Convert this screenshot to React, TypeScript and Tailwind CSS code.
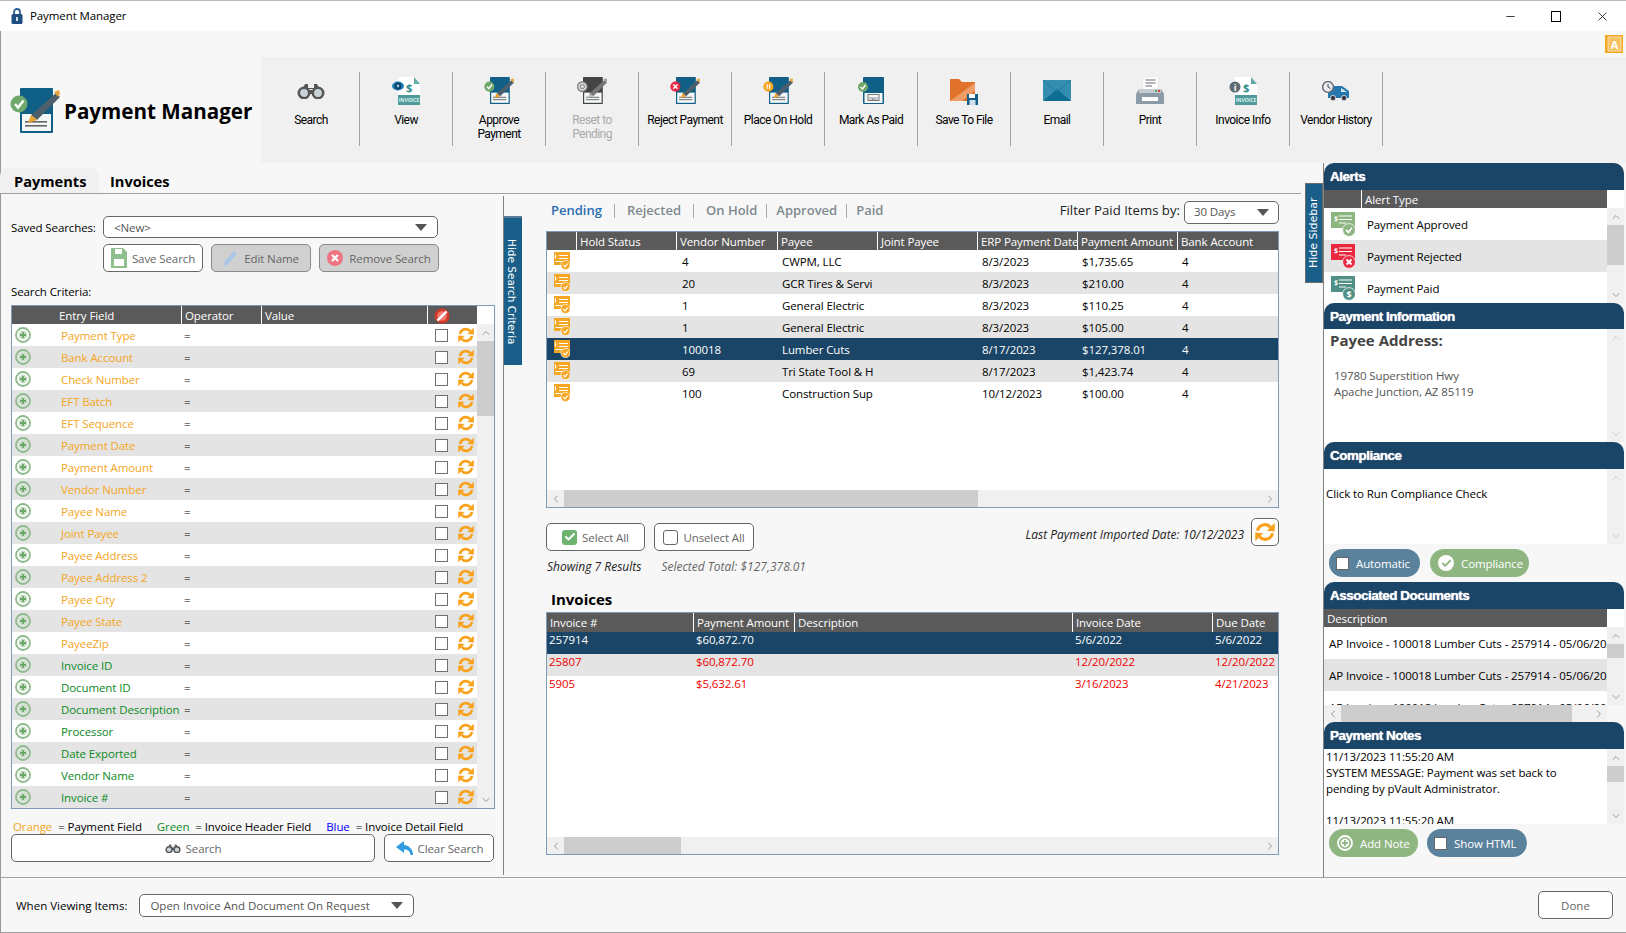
import React from 'react';
import { Check, ChevronDown, ChevronLeft, ChevronRight, ChevronUp, Minus, X } from 'lucide-react';

const searchFields = [
  { name: 'Payment Type', tone: 'orange' },
  { name: 'Bank Account', tone: 'orange' },
  { name: 'Check Number', tone: 'orange' },
  { name: 'EFT Batch', tone: 'orange' },
  { name: 'EFT Sequence', tone: 'orange' },
  { name: 'Payment Date', tone: 'orange' },
  { name: 'Payment Amount', tone: 'orange' },
  { name: 'Vendor Number', tone: 'orange' },
  { name: 'Payee Name', tone: 'orange' },
  { name: 'Joint Payee', tone: 'orange' },
  { name: 'Payee Address', tone: 'orange' },
  { name: 'Payee Address 2', tone: 'orange' },
  { name: 'Payee City', tone: 'orange' },
  { name: 'Payee State', tone: 'orange' },
  { name: 'PayeeZip', tone: 'orange' },
  { name: 'Invoice ID', tone: 'green' },
  { name: 'Document ID', tone: 'green' },
  { name: 'Document Description', tone: 'green' },
  { name: 'Processor', tone: 'green' },
  { name: 'Date Exported', tone: 'green' },
  { name: 'Vendor Name', tone: 'green' },
  { name: 'Invoice #', tone: 'green' },
];

const payments = [
  ['4', 'CWPM, LLC', '8/3/2023', '$1,735.65'],
  ['20', 'GCR Tires & Servi', '8/3/2023', '$210.00'],
  ['1', 'General Electric', '8/3/2023', '$110.25'],
  ['1', 'General Electric', '8/3/2023', '$105.00'],
  ['100018', 'Lumber Cuts', '8/17/2023', '$127,378.01'],
  ['69', 'Tri State Tool & H', '8/17/2023', '$1,423.74'],
  ['100', 'Construction Sup', '10/12/2023', '$100.00'],
];

const invoices = [
  ['257914', '$60,872.70', '5/6/2022', '5/6/2022'],
  ['25807', '$60,872.70', '12/20/2022', '12/20/2022'],
  ['5905', '$5,632.61', '3/16/2023', '4/21/2023'],
];

const paymentCols = 'grid-cols-[29px_100px_101px_100px_100px_100px_100px_100px]';
const invoiceCols = 'grid-cols-[146px_101px_278px_140px_67px]';

// Icons
const DocPen = ({ badge, grey, large }: { badge: string; grey?: boolean; large?: boolean }) => (
  <svg viewBox="0 0 50 45" className={large ? 'w-[50px] h-[45px]' : 'w-[30px] h-[27px]'}>
    <rect x="10" y="0" width="33" height="45" rx="1" fill={grey ? '#444' : '#0f5f86'} />
    <rect x="12" y="26" width="29" height="17" fill="#f4f7f8" />
    <rect x="15" y="33" width="22" height="1.6" fill="#666" />
    <rect x="15" y="37" width="22" height="1.6" fill="#666" />
    <path d="M46 5 L50 9 L27 32 L21 27 Z" fill={grey ? '#777' : '#4d5f6d'} />
    <path d="M44 4 L49 2 L50 6 L48 9 Z" fill={grey ? '#999' : '#e9a33b'} />
    <path d="M21 27 L27 32 L18 35 Z" fill={grey ? '#bbb' : '#f0a22e'} />
    {badge === 'check' && (
      <g>
        <circle cx="9" cy="16" r="8.5" fill="#6fa86a" />
        <path d="M5 16 L8 19.5 L13.5 12.5" stroke="#fff" strokeWidth="2.4" fill="none" />
      </g>
    )}
    {badge === 'x' && (
      <g>
        <circle cx="9" cy="16" r="8.5" fill="#e52b46" />
        <path d="M5.5 12.5 L12.5 19.5 M12.5 12.5 L5.5 19.5" stroke="#fff" strokeWidth="2.4" />
      </g>
    )}
    {badge === 'hold' && (
      <g>
        <circle cx="9" cy="16" r="8.5" fill="#f5a623" />
        <path d="M7 12 V20 M11 12 V20" stroke="#fff" strokeWidth="2" />
      </g>
    )}
    {badge === 'reset' && (
      <g>
        <circle cx="9" cy="16" r="8" fill="#ddd" stroke="#777" strokeWidth="2" />
        <circle cx="9" cy="16" r="3.5" fill="none" stroke="#777" strokeWidth="1.6" />
      </g>
    )}
  </svg>
);

const PaidDoc = () => (
  <svg viewBox="0 0 30 27" className="w-[30px] h-[27px]">
    <rect x="7" y="0" width="21" height="27" rx="1" fill="#0f5f86" />
    <rect x="8.5" y="16" width="18" height="10" fill="#f4f7f8" />
    <rect x="12" y="17.5" width="11" height="6" fill="none" stroke="#777" />
    <text x="17.5" y="22.5" fontSize="4" textAnchor="middle" fill="#555">PAID</text>
    <circle cx="7" cy="10" r="5" fill="#6fa86a" />
    <path d="M4.5 10 L6.5 12 L9.5 8" stroke="#fff" strokeWidth="1.4" fill="none" />
  </svg>
);

const Binoculars = ({ small }: { small?: boolean }) => (
  <svg viewBox="0 0 28 16" className={small ? 'w-[16px] h-[9px]' : 'w-[28px] h-[16px]'}>
    <path d="M8 1 H11 V6 H17 V1 H20 L22 5 H6 Z" fill="#555" />
    <circle cx="7" cy="10" r="5.2" fill="#c7d3d9" stroke="#555" strokeWidth="2.6" />
    <circle cx="21" cy="10" r="5.2" fill="#c7d3d9" stroke="#555" strokeWidth="2.6" />
    <rect x="12" y="7" width="4" height="4" fill="#555" />
  </svg>
);

const InvoiceDoc = ({ info }: { info?: boolean }) => (
  <svg viewBox="0 0 28 28" className="w-[28px] h-[28px]">
    <path d="M6 0 H22 L28 7 V28 H6 Z" fill="#fff" />
    <path d="M22 0 L28 7 H22 Z" fill="#62aaa6" />
    <rect x="6" y="18" width="22" height="10" fill="#4f9a98" />
    <text x="17" y="25" fontSize="5.2" fontWeight="700" textAnchor="middle" fill="#d8efee">INVOICE</text>
    <text x="17" y="15" fontSize="11" fontWeight="700" textAnchor="middle" fill="#2f8d8b">$</text>
    {info ? (
      <g>
        <circle cx="6" cy="10" r="5.5" fill="#5e6b73" />
        <text x="6" y="13.5" fontSize="9" fontWeight="700" textAnchor="middle" fill="#fff">i</text>
      </g>
    ) : (
      <g>
        <ellipse cx="6" cy="9" rx="6" ry="4.4" fill="#1b7fb5" />
        <circle cx="6" cy="9" r="3.4" fill="#0a3f63" />
        <circle cx="6" cy="9" r="1.4" fill="#8fc7e6" />
      </g>
    )}
  </svg>
);

const FolderSave = () => (
  <svg viewBox="0 0 28 28" className="w-[28px] h-[28px]">
    <path d="M0 2 H9 L12 5 H25 V24 H0 Z" fill="#e0722c" />
    <path d="M0 24 L25 6 V14 L12 24 Z" fill="#ef9c66" />
    <rect x="17" y="17" width="11" height="11" fill="#155f86" />
    <rect x="19" y="17" width="6" height="4" fill="#fff" />
    <rect x="19.5" y="23" width="6" height="5" fill="#cfe0ea" />
  </svg>
);

const Envelope = () => (
  <svg viewBox="0 0 28 21" className="w-[28px] h-[21px]">
    <rect width="28" height="21" rx="1" fill="#358eb0" />
    <path d="M0 21 L14 9 L28 21 Z" fill="#0f6e93" />
    <path d="M0 0 L14 12 L28 0" fill="none" stroke="#1c7a9f" strokeWidth="1" />
  </svg>
);

const Printer = () => (
  <svg viewBox="0 0 28 27" className="w-[28px] h-[27px]">
    <rect x="7" y="0" width="15" height="14" fill="#fff" stroke="#ddd" strokeWidth="0.5" />
    <path d="M9.5 3 H19.5 M9.5 6 H19.5 M9.5 9 H16" stroke="#667" strokeWidth="1" />
    <path d="M3 12 H25 L28 17 V27 H0 V17 Z" fill="#8c9ba6" />
    <rect x="3" y="12" width="22" height="4" fill="#c4ccd2" />
    <rect x="22" y="13" width="2" height="2" fill="#d9414a" />
    <rect x="19" y="13" width="2" height="2" fill="#5aa760" />
    <rect x="6" y="20" width="16" height="4" fill="#fff" />
  </svg>
);

const Truck = () => (
  <svg viewBox="0 0 28 20" className="w-[28px] h-[20px]">
    <path d="M6 5 H20 L27 10 V17 H6 Z" fill="#2577ad" />
    <path d="M19 7 L25 11 H19 Z" fill="#cde4f2" />
    <circle cx="11" cy="17" r="2.6" fill="#334" stroke="#ccc" />
    <circle cx="22" cy="17" r="2.6" fill="#334" stroke="#ccc" />
    <circle cx="6" cy="6" r="5.4" fill="#e8ecef" stroke="#667" strokeWidth="1.4" />
    <path d="M6 3 V6 L8.5 7.5" stroke="#445" strokeWidth="1" fill="none" />
  </svg>
);

const CheckBadge = ({ color, mark }: { color: string; mark: string }) => (
  <svg viewBox="0 0 24 26" className="w-[24px] h-[26px]">
    <rect y="1" width="24" height="16" fill={color} />
    <text x="3" y="10" fontSize="7" fontWeight="700" fill="#fff">$</text>
    <path d="M8 5 H21 M8 8.5 H21 M8 12 H15" stroke="#fff" strokeWidth="1.2" />
    <circle cx="18" cy="19" r="6.4" fill={color} stroke="#fff" strokeWidth="0.8" />
    {mark === 'check' && <path d="M15 19 L17.4 21.4 L21 16.8" stroke="#fff" strokeWidth="1.8" fill="none" />}
    {mark === 'x' && <path d="M15.5 16.5 L20.5 21.5 M20.5 16.5 L15.5 21.5" stroke="#fff" strokeWidth="2" />}
    {mark === 'dollar' && <text x="18" y="22.5" fontSize="9" fontWeight="700" textAnchor="middle" fill="#fff">$</text>}
  </svg>
);

const HoldIcon = () => (
  <svg viewBox="0 0 16 18" className="w-[16px] h-[18px]">
    <rect width="16" height="13" y="0" fill="#f5a623" />
    <path d="M5 3.5 H14 M5 6.5 H14 M1.5 9.5 H9" stroke="#fff" strokeWidth="1.2" />
    <path d="M1.5 2.5 V6.5" stroke="#fff" strokeWidth="1.2" />
    <circle cx="11.5" cy="13" r="4.6" fill="#f5a623" stroke="#fff" strokeWidth="0.7" />
    <path d="M9.4 13 L11 14.8 L13.6 11.6" stroke="#fff" strokeWidth="1.2" fill="none" />
  </svg>
);

const AddCircle = ({ white }: { white?: boolean }) => (
  <svg viewBox="0 0 16 16" className="w-[16px] h-[16px]">
    <circle cx="8" cy="8" r="7" fill="none" stroke={white ? '#fff' : '#8dbb8d'} strokeWidth="1.8" />
    <circle cx="8" cy="8" r="4.4" fill={white ? '#fff' : '#c5dfc5'} />
    <path d="M8 5 V11 M5 8 H11" stroke={white ? '#8fb581' : '#6aa66a'} strokeWidth="1.8" />
  </svg>
);

const Refresh = ({ large }: { large?: boolean }) => (
  <svg viewBox="0 0 16 16" className={large ? 'w-[20px] h-[20px]' : 'w-[16px] h-[16px]'}>
    <path d="M2 7 A6 6 0 0 1 12.4 4.2" fill="none" stroke="#f9a11b" strokeWidth="2.6" />
    <path d="M15.8 0.8 V7.6 L9.4 7 Z" fill="#f9a11b" />
    <path d="M14 9 A6 6 0 0 1 3.6 11.8" fill="none" stroke="#f9a11b" strokeWidth="2.6" />
    <path d="M0.2 15.2 V8.4 L6.6 9 Z" fill="#f9a11b" />
  </svg>
);

const NoEntry = () => (
  <svg viewBox="0 0 16 16" className="w-[16px] h-[16px]">
    <circle cx="8" cy="8" r="7.5" fill="#d5372a" />
    <circle cx="8" cy="8" r="4.8" fill="#ea7a6e" />
    <path d="M3.4 12.6 L12.6 3.4" stroke="#fff" strokeWidth="2.4" />
  </svg>
);

const Lock = () => (
  <svg viewBox="0 0 12 16" className="w-[12px] h-[16px]">
    <path d="M3 7 V4 A3 3 0 0 1 9 4 V7" fill="none" stroke="#2d5f93" strokeWidth="1.8" />
    <rect x="0.5" y="6" width="11" height="10" rx="1.5" fill="#1f4e80" />
    <rect x="5" y="9" width="2" height="4" fill="#cfe0ee" />
  </svg>
);

const AlertBook = () => (
  <svg viewBox="0 0 18 18" className="w-[18px] h-[18px]">
    <rect width="18" height="18" fill="#f4a81f" />
    <rect x="3" y="2" width="13" height="14" fill="#f7c15d" stroke="#fff" strokeWidth="0.6" />
    <text x="9.5" y="14" fontSize="11" fontWeight="700" textAnchor="middle" fill="#fff">A</text>
  </svg>
);

const Floppy = () => (
  <svg viewBox="0 0 16 20" className="w-[16px] h-[20px]">
    <path d="M0 0 H12 L16 4 V20 H0 Z" fill="#8fbe8f" />
    <rect x="4" y="1" width="7" height="5" fill="#fff" />
    <rect x="3" y="11" width="10" height="7" fill="#fff" />
  </svg>
);

const BackArrow = () => (
  <svg viewBox="0 0 18 16" className="w-[18px] h-[16px]">
    <path d="M9 1 L1 7 L9 13 V9.5 C13 9.5 15 11 15.5 15 L18 15 C18 9 14 5.5 9 5 Z" fill="#2f9be0" />
  </svg>
);

// Shared bits
const Caret = () => <span className="w-0 h-0 border-x-[6px] border-x-transparent border-t-[7px] border-t-[#555]" />;

const VScroll = ({ thumb, faded }: { thumb: number; faded?: boolean }) => (
  <div className="w-[17px] shrink-0 bg-[#f0f0f0] flex flex-col items-center h-full">
    <div className="h-[17px] shrink-0 flex items-center justify-center">
      <ChevronUp size={12} className={faded ? 'text-[#ccc]' : 'text-[#999]'} />
    </div>
    <div className="flex-1 w-full">
      <div className="bg-[#cdcdcd] w-full" style={{ height: thumb }} />
    </div>
    <div className="h-[17px] shrink-0 flex items-center justify-center">
      <ChevronDown size={12} className={faded ? 'text-[#ccc]' : 'text-[#999]'} />
    </div>
  </div>
);

const HScroll = ({ thumb }: { thumb: number }) => (
  <div className="h-[17px] shrink-0 bg-[#f0f0f0] flex items-center">
    <div className="w-[17px] shrink-0 flex justify-center">
      <ChevronLeft size={12} className="text-[#999]" />
    </div>
    <div className="flex-1 h-full">
      <div className="bg-[#cdcdcd] h-full" style={{ width: thumb }} />
    </div>
    <div className="w-[17px] shrink-0 flex justify-center">
      <ChevronRight size={12} className="text-[#999]" />
    </div>
  </div>
);

const Head = ({ children, first }: { children?: React.ReactNode; first?: boolean }) => (
  <div className={`text-white pl-[3px] whitespace-nowrap overflow-hidden leading-[20px] ${first ? '' : 'border-l border-white'}`}>
    {children}
  </div>
);

const SectionTitle = ({ children, short }: { children: React.ReactNode; short?: boolean }) => (
  <div
    className={`${short ? 'h-[26px]' : 'h-[27px]'} shrink-0 bg-[#1a4566] rounded-t-[10px] px-[6px] pt-[2px] flex items-center text-white font-['Liberation_Sans',sans-serif] font-bold text-[13.5px] tracking-[-0.5px] [text-shadow:0_0_1px_#fff]`}
  >
    {children}
  </div>
);

const OutlineButton = ({ children, className }: { children: React.ReactNode; className: string }) => (
  <button className={`flex items-center justify-center gap-[5px] bg-white border border-[#666] rounded-[5px] text-[#666] ${className}`}>
    {children}
  </button>
);

const Pill = ({ children, className }: { children: React.ReactNode; className: string }) => (
  <div className={`h-[28px] rounded-full flex items-center gap-[7px] text-white ${className}`}>{children}</div>
);

const Label = ({ children }: { children: React.ReactNode }) => <span className="pt-[2px] whitespace-nowrap">{children}</span>;

const toolbarItems = [
  { icon: <Binoculars />, label: ['Search'], wide: true },
  { icon: <InvoiceDoc />, label: ['View'] },
  { icon: <DocPen badge="check" />, label: ['Approve', 'Payment'] },
  { icon: <DocPen badge="reset" grey />, label: ['Reset to', 'Pending'], off: true },
  { icon: <DocPen badge="x" />, label: ['Reject Payment'] },
  { icon: <DocPen badge="hold" />, label: ['Place On Hold'] },
  { icon: <PaidDoc />, label: ['Mark As Paid'] },
  { icon: <FolderSave />, label: ['Save To File'] },
  { icon: <Envelope />, label: ['Email'] },
  { icon: <Printer />, label: ['Print'] },
  { icon: <InvoiceDoc info />, label: ['Invoice Info'] },
  { icon: <Truck />, label: ['Vendor History'] },
];

const Toolbar = () => (
  <div className="h-[106px] bg-[#f0f0f0] flex pt-[15px]">
    {toolbarItems.map((item) => (
      <div
        key={item.label[0]}
        className={`h-[74px] border-r border-[#a3a3a3] flex flex-col items-center ${item.wide ? 'w-[99px] pl-[2px]' : 'w-[93px]'}`}
      >
        <div className="h-[34px] pt-[3px] flex items-center justify-center">{item.icon}</div>
        <div
          className={`mt-[7px] text-center leading-[14px] font-['Roboto',sans-serif] text-[12px] tracking-[-0.55px] whitespace-nowrap ${
            item.off ? 'text-[#aaa]' : 'text-black'
          }`}
        >
          {item.label.map((line) => (
            <div key={line}>{line}</div>
          ))}
        </div>
      </div>
    ))}
  </div>
);

const SearchPanel = () => (
  <div className="w-[504px] shrink-0 mt-[2px] mb-[2px] border-r border-[#808080] pl-[11px]">
    <div className="mt-[20px] flex items-center h-[22px]">
      <span className="w-[92px] text-black pt-[2px]">Saved Searches:</span>
      <div className="w-[335px] h-[22px] bg-white border border-[#666] rounded-[5px] flex items-center justify-between pl-[10px] pr-[10px] text-[#555]">
        <Label>&lt;New&gt;</Label>
        <Caret />
      </div>
    </div>
    <div className="mt-[6px] ml-[92px] flex gap-[8px] h-[28px]">
      <OutlineButton className="w-[100px]">
        <Floppy />
        <Label>Save Search</Label>
      </OutlineButton>
      <button className="w-[100px] flex items-center justify-center gap-[6px] bg-[#d0d0d0] border border-[#8a8a8a] rounded-[5px] text-[#666]">
        <svg viewBox="0 0 16 18" className="w-[15px] h-[17px]">
          <path d="M12 1 L15 4 L5 15 L1 17 L2 12 Z" fill="#a9c6e6" />
        </svg>
        <Label>Edit Name</Label>
      </button>
      <button className="w-[120px] flex items-center justify-center gap-[6px] bg-[#d0d0d0] border border-[#8a8a8a] rounded-[5px] text-[#666]">
        <svg viewBox="0 0 16 16" className="w-[16px] h-[16px]">
          <circle cx="8" cy="8" r="8" fill="#ef7482" />
          <path d="M5 5 L11 11 M11 5 L5 11" stroke="#fff" strokeWidth="2.2" />
        </svg>
        <Label>Remove Search</Label>
      </button>
    </div>
    <div className="mt-[10px] h-[18px] leading-[20px] text-black">Search Criteria:</div>
    <div className="mt-[5px] w-[484px] h-[504px] border border-[#7f9ab8] flex flex-col bg-white">
      <div className="h-[18px] shrink-0 flex">
        <div className="w-[465px] bg-[#5a5a5a] grid grid-cols-[169px_80px_166px_50px]">
          <div className="text-white pl-[47px] leading-[20px]">Entry Field</div>
          <Head>Operator</Head>
          <Head>Value</Head>
          <div className="border-l border-white flex items-center pl-[6px]">
            <NoEntry />
          </div>
        </div>
      </div>
      <div className="flex-1 flex min-h-0">
        <div className="w-[465px]">
          {searchFields.map((field, idx) => (
            <div
              key={field.name}
              className={`h-[22px] leading-[24px] grid grid-rows-[22px] grid-cols-[49px_123px_251px_42px] ${idx % 2 ? 'bg-[#e4e4e4]' : 'bg-white'}`}
            >
              <div className="pl-[3px] flex self-center">
                <AddCircle />
              </div>
              <div className={`whitespace-nowrap ${field.tone === 'orange' ? 'text-[#f5a623]' : 'text-[#0b8a1e]'}`}>
                {field.name}
              </div>
              <div className="text-black">=</div>
              <div className="flex items-center gap-[10px] self-center">
                <span className="w-[13px] h-[13px] border border-[#707070] bg-white shrink-0" />
                <Refresh />
              </div>
            </div>
          ))}
        </div>
        <VScroll thumb={75} />
      </div>
    </div>
    <div className="mt-[10px] h-[16px] leading-[16px] flex pl-[2px] whitespace-nowrap">
      <span className="text-[#f5a623]">Orange</span>
      <span className="text-black ml-[6px]">= Payment Field</span>
      <span className="text-[#0b8a1e] ml-[15px]">Green</span>
      <span className="text-black ml-[6px]">= Invoice Header Field</span>
      <span className="text-[#0000ff] ml-[15px]">Blue</span>
      <span className="text-black ml-[6px]">= Invoice Detail Field</span>
    </div>
    <div className="-mt-px flex gap-[9px] h-[28px]">
      <OutlineButton className="w-[364px]">
        <Binoculars small />
        <Label>Search</Label>
      </OutlineButton>
      <OutlineButton className="w-[110px]">
        <BackArrow />
        <Label>Clear Search</Label>
      </OutlineButton>
    </div>
  </div>
);

const statusTabs = [
  { label: 'Rejected', gap: 'mx-[12px]' },
  { label: 'On Hold', gap: 'mx-[12px]' },
  { label: 'Approved', gap: 'mx-[9px]' },
  { label: 'Paid', gap: 'mx-[9px]' },
];

const PaymentsGrid = () => (
  <div className="mt-[7px] h-[277px] border border-[#7f9ab8] bg-white flex flex-col">
    <div className={`h-[18px] shrink-0 bg-[#5a5a5a] grid ${paymentCols}`}>
      <div />
      <Head>Hold Status</Head>
      <Head>Vendor Number</Head>
      <Head>Payee</Head>
      <Head>Joint Payee</Head>
      <Head>ERP Payment Date</Head>
      <Head>Payment Amount</Head>
      <Head>Bank Account</Head>
    </div>
    <div className="flex-1">
      {payments.map((row, idx) => (
        <div
          key={row[0] + row[3]}
          className={`h-[22px] leading-[24px] grid grid-rows-[22px] ${paymentCols} ${
            idx === 4 ? 'bg-[#1a4566] text-white' : idx % 2 ? 'bg-[#e4e4e4] text-black' : 'bg-white text-black'
          }`}
        >
          <div className="pl-[7px] flex self-center">
            <HoldIcon />
          </div>
          <div />
          <div className="pl-[6px]">{row[0]}</div>
          <div className="pl-[5px] pr-[3px]">
            <div className="overflow-hidden whitespace-nowrap">{row[1]}</div>
          </div>
          <div />
          <div className="pl-[5px]">{row[2]}</div>
          <div className="pl-[5px]">{row[3]}</div>
          <div className="pl-[5px]">4</div>
        </div>
      ))}
    </div>
    <HScroll thumb={414} />
  </div>
);

const InvoicesGrid = () => (
  <div className="h-[243px] border border-[#7f9ab8] bg-white flex flex-col">
    <div className={`h-[19px] shrink-0 bg-[#5a5a5a] grid ${invoiceCols}`}>
      <Head first>Invoice #</Head>
      <Head>Payment Amount</Head>
      <Head>Description</Head>
      <Head>Invoice Date</Head>
      <Head>Due Date</Head>
    </div>
    <div className="flex-1">
      {invoices.map((row, idx) => (
        <div
          key={row[0]}
          className={`h-[22px] leading-[16px] grid ${invoiceCols} ${
            idx === 0 ? 'bg-[#1a4566] text-white' : idx === 1 ? 'bg-[#e4e4e4] text-[#f00000]' : 'bg-white text-[#f00000]'
          }`}
        >
          <div className="pl-[2px]">{row[0]}</div>
          <div className="pl-[3px]">{row[1]}</div>
          <div />
          <div className="pl-[3px]">{row[2]}</div>
          <div className="pl-[3px] whitespace-nowrap">{row[3]}</div>
        </div>
      ))}
    </div>
    <HScroll thumb={117} />
  </div>
);

const CenterPanel = () => (
  <div className="flex-1 pl-[24px] pr-[26px] min-w-0">
    <div className="mt-[6px] h-[24px] flex items-center justify-between">
      <div className="flex items-center pl-[5px] pb-[3px] text-[13px] tracking-normal font-semibold text-[#7f8a8f] whitespace-nowrap">
        <span className="text-[#2a6db0]">Pending</span>
        {statusTabs.map((tab) => (
          <React.Fragment key={tab.label}>
            <span className={`w-px h-[14px] bg-[#aaa] ${tab.gap}`} />
            <span>{tab.label}</span>
          </React.Fragment>
        ))}
      </div>
      <div className="flex items-center gap-[4px]">
        <span className="text-[13.2px] tracking-normal text-[#222] pb-[3px]">Filter Paid Items by:</span>
        <div className="w-[95px] h-[23px] bg-white border border-[#666] rounded-[5px] flex items-center justify-between px-[9px] text-[#555]">
          <span>30 Days</span>
          <Caret />
        </div>
      </div>
    </div>
    <PaymentsGrid />
    <div className="mt-[10px] h-[33px] flex justify-between">
      <div className="flex gap-[9px] items-end">
        <OutlineButton className="w-[99px] h-[28px]">
          <span className="w-[15px] h-[15px] rounded-[3px] bg-[#6fb36f] flex items-center justify-center">
            <Check size={12} strokeWidth={4} className="text-white" />
          </span>
          <Label>Select All</Label>
        </OutlineButton>
        <OutlineButton className="w-[100px] h-[28px]">
          <span className="w-[15px] h-[15px] rounded-[3px] border border-[#666] bg-white" />
          <Label>Unselect All</Label>
        </OutlineButton>
      </div>
      <div className="flex gap-[7px] items-start">
        <span className="italic text-[12px] tracking-normal text-[#222] leading-[34px]">Last Payment Imported Date: 10/12/2023</span>
        <button className="w-[28px] h-[28px] bg-white border border-[#666] rounded-[5px] flex items-center justify-center">
          <Refresh large />
        </button>
      </div>
    </div>
    <div className="mt-[8px] h-[16px] leading-[16px] italic text-[12px] tracking-normal flex pl-[1px]">
      <span className="text-[#222]">Showing 7 Results</span>
      <span className="text-[#666] ml-[20px]">Selected Total: $127,378.01</span>
    </div>
    <div className="mt-[14px] mb-[3px] h-[20px] leading-[20px] pl-[5px] text-[15px] tracking-normal font-bold text-black">Invoices</div>
    <InvoicesGrid />
  </div>
);

const alertRows = [
  { label: 'Payment Approved', color: '#8db580', mark: 'check' },
  { label: 'Payment Rejected', color: '#e8283f', mark: 'x' },
  { label: 'Payment Paid', color: '#4f8f86', mark: 'dollar' },
];

const Sidebar = () => (
  <div className="w-[303px] shrink-0 border-l border-[#808080] pr-[2px] flex flex-col">
    <SectionTitle>Alerts</SectionTitle>
    <div className="h-[18px] shrink-0 bg-white flex">
      <div className="w-[283px] bg-[#5a5a5a] grid grid-cols-[37px_1fr]">
        <div />
        <Head>Alert Type</Head>
      </div>
    </div>
    <div className="h-[95px] shrink-0 flex bg-white">
      <div className="flex-1 overflow-hidden">
        {alertRows.map((row, idx) => (
          <div key={row.label} className={`h-[32px] flex items-center pl-[7px] gap-[12px] text-black ${idx === 1 ? 'bg-[#e4e4e4]' : ''}`}>
            <CheckBadge color={row.color} mark={row.mark} />
            <Label>{row.label}</Label>
          </div>
        ))}
      </div>
      <VScroll thumb={40} />
    </div>
    <SectionTitle short>Payment Information</SectionTitle>
    <div className="h-[113px] shrink-0 bg-white flex">
      <div className="flex-1 pl-[6px]">
        <div className="text-[15px] tracking-normal font-bold text-[#444] leading-[22px]">Payee Address:</div>
        <div className="mt-[17px] pl-[4px] text-[#555] leading-[16px]">
          <div>19780 Superstition Hwy</div>
          <div>Apache Junction, AZ 85119</div>
        </div>
      </div>
      <VScroll thumb={0} faded />
    </div>
    <SectionTitle>Compliance</SectionTitle>
    <div className="h-[75px] shrink-0 bg-white flex">
      <div className="flex-1 pl-[2px] pt-[17px] text-black leading-[16px]">Click to Run Compliance Check</div>
      <VScroll thumb={0} faded />
    </div>
    <div className="h-[38px] shrink-0 flex gap-[10px] pl-[5px] pt-[5px]">
      <Pill className="w-[91px] bg-[#5a829c] pl-[7px]">
        <span className="w-[13px] h-[13px] bg-white border border-[#666]" />
        <Label>Automatic</Label>
      </Pill>
      <Pill className="w-[99px] bg-[#8fb581] pl-[8px]">
        <span className="w-[16px] h-[16px] rounded-full bg-white flex items-center justify-center">
          <Check size={11} strokeWidth={4} className="text-[#8fb581]" />
        </span>
        <Label>Compliance</Label>
      </Pill>
    </div>
    <SectionTitle>Associated Documents</SectionTitle>
    <div className="h-[18px] shrink-0 bg-white">
      <div className="w-[283px] h-full bg-[#5a5a5a] text-white pl-[3px] leading-[20px] overflow-hidden">Description</div>
    </div>
    <div className="h-[78px] shrink-0 flex bg-white">
      <div className="w-[283px] overflow-hidden">
        {[0, 1, 2].map((idx) => (
          <div key={idx} className={`h-[32px] flex items-center pl-[5px] text-black whitespace-nowrap ${idx === 1 ? 'bg-[#e4e4e4]' : ''}`}>
            <Label>AP Invoice - 100018 Lumber Cuts - 257914 - 05/06/2022</Label>
          </div>
        ))}
      </div>
      <VScroll thumb={14} />
    </div>
    <div className="w-[283px]">
      <HScroll thumb={231} />
    </div>
    <SectionTitle>Payment Notes</SectionTitle>
    <div className="h-[75px] shrink-0 bg-white flex">
      <div className="flex-1 overflow-hidden pl-[2px] text-black leading-[16px]">
        <div>11/13/2023 11:55:20 AM</div>
        <div>SYSTEM MESSAGE: Payment was set back to</div>
        <div>pending by pVault Administrator.</div>
        <div className="mt-[16px]">11/13/2023 11:55:20 AM</div>
      </div>
      <VScroll thumb={16} />
    </div>
    <div className="flex gap-[9px] pl-[5px] pt-[5px]">
      <Pill className="w-[89px] bg-[#8fb581] pl-[8px]">
        <AddCircle white />
        <Label>Add Note</Label>
      </Pill>
      <Pill className="w-[100px] bg-[#5a829c] pl-[7px]">
        <span className="w-[13px] h-[13px] bg-white border border-[#666]" />
        <Label>Show HTML</Label>
      </Pill>
    </div>
  </div>
);

export default function App() {
  return (
    <div className="w-[1626px] h-[933px] overflow-hidden bg-[#f7f7f7] flex flex-col shadow-[inset_1px_0_0_#999] font-['Open_Sans','Noto_Sans',sans-serif] text-[11.5px] tracking-[-0.1px]">
      <div className="h-[31px] shrink-0 bg-white border-t border-[#bbb] flex items-center pl-[11px] pr-[1px]">
        <Lock />
        <span className="ml-[7px] text-black">Payment Manager</span>
        <div className="ml-auto flex items-center text-black">
          <div className="w-[46px] flex justify-center">
            <Minus size={13} strokeWidth={1.4} />
          </div>
          <div className="w-[46px] flex justify-center">
            <span className="w-[10px] h-[11px] border border-black" />
          </div>
          <div className="w-[46px] flex justify-center">
            <X size={15} strokeWidth={1.2} />
          </div>
        </div>
      </div>

      <div className="h-[132px] shrink-0 flex">
        <div className="w-[261px] shrink-0 flex items-center pl-[10px] pt-[26px]">
          <DocPen badge="check" large />
          <span className="ml-[4px] pt-[2px] font-bold text-[20.6px] tracking-normal text-black whitespace-nowrap">Payment Manager</span>
        </div>
        <div className="flex-1 flex flex-col">
          <div className="h-[26px] flex justify-end items-end pr-[3px] pb-[4px]">
            <AlertBook />
          </div>
          <Toolbar />
        </div>
      </div>

      <div className="h-[714px] shrink-0 flex">
        <div className="w-[1305px] shrink-0 flex flex-col">
          <div className="h-[31px] shrink-0 mr-[4px] pt-[5px] flex border-b border-[#a0a0a0] text-[14.6px] tracking-normal font-bold text-black">
            <div className="w-[99px] h-full bg-[#f0f0f0] rounded-t-[8px] pl-[14px] leading-[27px]">Payments</div>
            <div className="pl-[11px] leading-[27px]">Invoices</div>
          </div>
          <div className="flex-1 flex min-h-0">
            <SearchPanel />
            <div className="w-[18px] shrink-0 mt-[22px] h-[149px] bg-[#1a5f8a] border-t-2 border-[#5a7d96] text-white flex justify-center pt-[1px] pr-[3px] [writing-mode:vertical-rl] items-center font-['DejaVu_Sans',sans-serif] text-[10.5px] tracking-normal">
              Hide Search Criteria
            </div>
            <CenterPanel />
          </div>
        </div>
        <div className="w-[18px] shrink-0 mt-[20px] h-[100px] bg-[#1a5f8a] border border-[#6a6a6a] text-white flex items-center justify-center [writing-mode:vertical-rl] rotate-180 font-['DejaVu_Sans',sans-serif] text-[11px] tracking-normal">
          Hide Sidebar
        </div>
        <Sidebar />
      </div>

      <div className="flex-1 border-t border-b border-[#a0a0a0] flex items-center pl-[16px] pr-[13px] tracking-normal">
        <span className="text-black pt-[2px]">When Viewing Items:</span>
        <div className="ml-[12px] w-[275px] h-[23px] bg-white border border-[#666] rounded-[5px] flex items-center justify-between pl-[10px] pr-[10px] text-[#555]">
          <Label>Open Invoice And Document On Request</Label>
          <Caret />
        </div>
        <button className="ml-auto w-[75px] h-[28px] pt-[2px] bg-white border border-[#666] rounded-[5px] text-[#666]">Done</button>
      </div>
    </div>
  );
}
